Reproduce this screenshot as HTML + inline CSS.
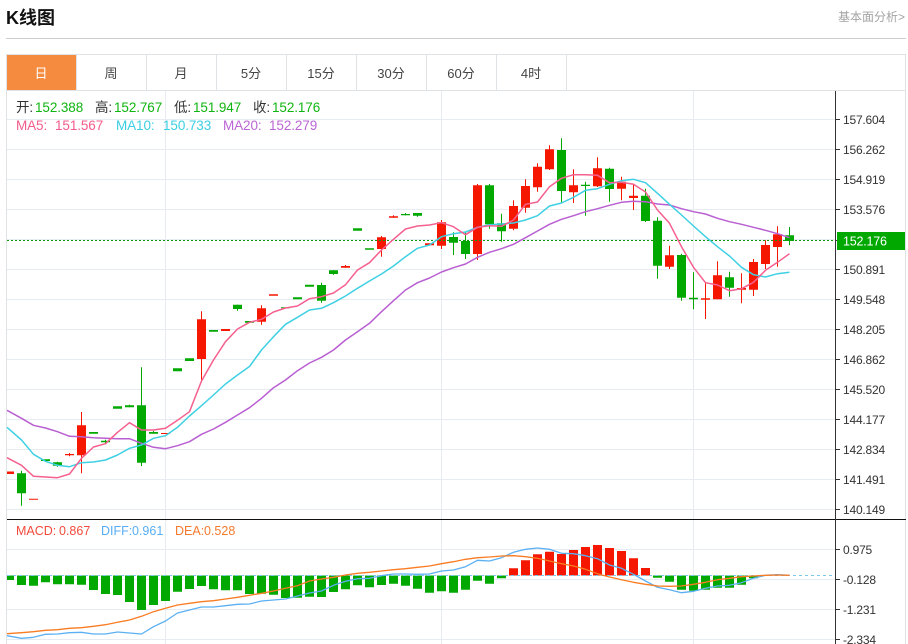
<!DOCTYPE html>
<html><head><meta charset="utf-8"><style>
html,body{margin:0;padding:0;background:#fff}
body{width:908px;height:644px;overflow:hidden;position:relative}
svg{position:absolute;left:0;top:0}
text{font-family:"Liberation Sans","Noto Sans CJK SC",sans-serif}
.ax{font-size:12px;fill:#333;letter-spacing:-.2px}
.tb{font-size:13px;fill:#444;text-anchor:middle}
.lg{font-size:13.5px;letter-spacing:-.1px}
.m{font-size:12.5px}
</style></head><body>
<svg width="908" height="644" viewBox="0 0 908 644">
<text x="6" y="24" font-size="18" font-weight="700" fill="#111">K线图</text>
<text x="905" y="21" font-size="12" fill="#a3a3a3" text-anchor="end">基本面分析&gt;</text>
<path d="M6 38.5H906" stroke="#ccc" fill="none"/>
<path d="M6 54.5H906M6 90.5H906M6.5 54V644M905.5 54V644M76.5 55V90M146.5 55V90M216.5 55V90M286.5 55V90M356.5 55V90M426.5 55V90M496.5 55V90M566.5 55V90" stroke="#dfe3e6" fill="none"/>
<rect x="7" y="55" width="69" height="35" fill="#f48b3f"/>
<text class="tb" x="41" y="78" style="fill:#fff">日</text>
<text class="tb" x="111" y="78">周</text>
<text class="tb" x="181" y="78">月</text>
<text class="tb" x="251" y="78">5分</text>
<text class="tb" x="321" y="78">15分</text>
<text class="tb" x="391" y="78">30分</text>
<text class="tb" x="461" y="78">60分</text>
<text class="tb" x="531" y="78">4时</text>
<!-- grid -->
<path d="M7 119.5H835M7 149.5H835M7 179.5H835M7 209.5H835M7 239.5H835M7 269.5H835M7 299.5H835M7 329.5H835M7 359.5H835M7 389.5H835M7 419.5H835M7 449.5H835M7 479.5H835M7 509.5H835M7 549.5H835M7 579.5H835M7 609.5H835M7 639.5H835M165.5 91V644M441.5 91V644M693.5 91V644" stroke="#e6ecf2" fill="none"/>
<!-- legend -->
<text class="lg" y="112"><tspan x="16" fill="#333">开:</tspan><tspan x="35" fill="#11b511">152.388</tspan><tspan x="95" fill="#333">高:</tspan><tspan x="114" fill="#11b511">152.767</tspan><tspan x="174" fill="#333">低:</tspan><tspan x="193" fill="#11b511">151.947</tspan><tspan x="253" fill="#333">收:</tspan><tspan x="272" fill="#11b511">152.176</tspan></text>
<text class="lg" y="130"><tspan x="16" fill="#f45c8c">MA5:</tspan><tspan x="55" fill="#f45c8c">151.567</tspan><tspan x="116" fill="#3ccfe3">MA10:</tspan><tspan x="163" fill="#3ccfe3">150.733</tspan><tspan x="223" fill="#bb66d4">MA20:</tspan><tspan x="269" fill="#bb66d4">152.279</tspan></text>
<!-- wicks -->
<path stroke="#00a800" fill="none" d="M21.5 470.7V505.7M57.5 461.7V466.7M105.5 439.7V443.3M129.5 404.7V407.3M141.5 367.3V466M153.5 431V433.7M237.5 304.7V310.7M321.5 282.7V302.7M333.5 270.3V274.7M405.5 213V215.3M417.5 213V216.7M453.5 232.3V255M465.5 232.3V259M489.5 184V228.7M501.5 213.7V241.7M561.5 138.3V202.3M585.5 181.7V215.7M609.5 167.7V201.7M645.5 188.7V222M657.5 217.3V278.7M681.5 253.7V300.7M693.5 272.3V309.3M729.5 271.7V296.7M789.5 227V245.3"/>
<path stroke="#f51700" fill="none" d="M69.5 453V456.3M81.5 412V473.3M201.5 311.3V380M261.5 305.3V324.7M345.5 265V267.7M381.5 236V256.7M393.5 215.3V217.7M441.5 220V249M477.5 184V260M513.5 200.3V230.3M525.5 179.3V212.7M537.5 163.3V191.7M549.5 145.3V170M573.5 169.3V203M597.5 157.3V187M621.5 176.7V200.3M633.5 184V210M669.5 245.7V269M705.5 283.3V319M717.5 261.3V299.3M741.5 273.3V303.3M753.5 259V296M765.5 240.3V269M777.5 226.3V266.7"/>
<!-- bodies -->
<path fill="#00a800" d="M17 473.3h9V493.3h-9zM41 459.3h9V461h-9zM53 462.3h9V465.7h-9zM89 432h9V433.7h-9zM101 440.7h9V442.3h-9zM113 406.3h9V408.7h-9zM125 405.3h9V407.3h-9zM137 405.3h9V462.7h-9zM149 432h9V433.7h-9zM173 368.3h9V371.3h-9zM185 358.3h9V361h-9zM209 330h9V331.7h-9zM233 304.7h9V309h-9zM245 321h9V322.7h-9zM281 307.3h9V308.3h-9zM293 297.3h9V299.3h-9zM305 284.7h9V286.7h-9zM317 285h9V300.7h-9zM329 270.3h9V274h-9zM353 228.3h9V230.7h-9zM365 248.3h9V249.7h-9zM401 214h9V215.3h-9zM413 213h9V215.7h-9zM449 237h9V242.7h-9zM461 241h9V254h-9zM485 185.3h9V224.3h-9zM497 223.3h9V231.3h-9zM557 150h9V191h-9zM581 184.7h9V186h-9zM605 168.7h9V189h-9zM641 195.7h9V221h-9zM653 220.7h9V265.7h-9zM677 255h9V297.7h-9zM689 297.7h9V299.3h-9zM725 277.3h9V287.7h-9zM785 235.3h9V241h-9z"/>
<path fill="#f51700" d="M7 471.5h7V474H7zM29 498.7h9V499.7h-9zM65 454h9V455.3h-9zM77 425.3h9V455.3h-9zM161 433h9V434h-9zM197 319.3h9V359h-9zM221 329h9V331h-9zM257 308.3h9V321.7h-9zM269 294.3h9V295.7h-9zM341 266h9V267.7h-9zM377 237.3h9V249h-9zM389 216.3h9V217.7h-9zM425 243.3h9V245.3h-9zM437 222.3h9V245.7h-9zM473 185.3h9V254h-9zM509 206h9V228.7h-9zM521 186h9V207.7h-9zM533 166.7h9V187.3h-9zM545 149.3h9V169.3h-9zM569 185.3h9V192.3h-9zM593 168.3h9V186.3h-9zM617 181.7h9V188.7h-9zM629 195.7h9V198h-9zM665 255.3h9V266.7h-9zM701 298.3h9V299.7h-9zM713 275.3h9V299.3h-9zM737 288h9V289.7h-9zM749 262h9V289.7h-9zM761 245h9V264h-9zM773 234.3h9V247h-9z"/>
<!-- price line -->
<path d="M7 240.5H835" stroke="#0a9a0a" stroke-dasharray="2 2" fill="none"/>
<!-- MA lines -->
<g fill="none" stroke-width="1.5" stroke-linejoin="round">
<polyline stroke="#b95fd2" points="7,410.3 21.5,418.3 33.5,425.3 45.5,428 57.5,431.7 69.5,436.3 81.5,436.7 93.5,437.7 105.5,438.3 117.5,438.7 129.5,438.7 141.5,443.3 153.5,447.3 165.5,448.7 177.5,445.7 189.5,441.7 201.5,434.3 213.5,429 225.5,422.3 237.5,415 249.5,407.7 261.5,398.3 273.5,387.7 285.5,380 297.5,370.7 309.5,363 321.5,357.3 333.5,350 345.5,340 357.5,331.7 369.5,323.3 381.5,311.7 393.5,300.7 405.5,290 417.5,282.7 429.5,278 441.5,272 453.5,267.7 465.5,264 477.5,257.3 489.5,252.3 501.5,248.7 513.5,244.3 525.5,237.7 537.5,231 549.5,224.3 561.5,219.3 573.5,215.7 585.5,211.7 597.5,208.7 609.5,205.3 621.5,202.3 633.5,201.3 645.5,201.7 657.5,204 669.5,205 681.5,208.7 693.5,211.7 705.5,214 717.5,218.3 729.5,221.7 741.5,224.3 753.5,227.3 765.5,230.3 777.5,233.7 789.5,237.7"/>
<polyline stroke="#3fd0e4" points="7,427.3 21.5,440 33.5,454.3 45.5,461.3 57.5,465.3 69.5,466.7 81.5,462.7 93.5,462 105.5,460 117.5,455 129.5,448.3 141.5,445 153.5,438.3 165.5,435.7 177.5,427.3 189.5,416 201.5,405.7 213.5,395 225.5,384 237.5,375 249.5,366.5 261.5,350 273.5,336.7 285.5,324.3 297.5,317.3 309.5,310 321.5,308.3 333.5,302.7 345.5,296 357.5,288.3 369.5,281 381.5,274 393.5,266 405.5,256.7 417.5,248.3 429.5,245 441.5,236.7 453.5,233.7 465.5,232 477.5,227.3 489.5,224.7 501.5,224 513.5,223 525.5,220 537.5,215.7 549.5,206 561.5,203 573.5,197.3 585.5,190.3 597.5,188.7 609.5,184.3 621.5,180.7 633.5,179.3 645.5,182.7 657.5,193.3 669.5,204.3 681.5,215 693.5,226 705.5,236.7 717.5,246.7 729.5,256 741.5,267.3 753.5,274.7 765.5,277 777.5,273.7 789.5,272.3"/>
<polyline stroke="#f5608f" points="7,457.7 21.5,465.3 33.5,476.3 45.5,477 57.5,477.7 69.5,474 81.5,458.3 93.5,447 105.5,443.7 117.5,432.3 129.5,422.7 141.5,430 153.5,430 165.5,428.3 177.5,420.3 189.5,411.7 201.5,381 213.5,360 225.5,341.7 237.5,329 249.5,322.3 261.5,319.3 273.5,312 285.5,308 297.5,306 309.5,298.7 321.5,296.7 333.5,293 345.5,284.7 357.5,270 369.5,262.7 381.5,250 393.5,239.3 405.5,229 417.5,226 429.5,225 441.5,222.7 453.5,226.7 465.5,234.7 477.5,227.3 489.5,225.7 501.5,226.3 513.5,220 525.5,204.3 537.5,202 549.5,186.7 561.5,178.3 573.5,174.7 585.5,174.7 597.5,175.3 609.5,182.7 621.5,182.3 633.5,184.3 645.5,192 657.5,210 669.5,223.3 681.5,246.7 693.5,267.3 705.5,282.7 717.5,285 729.5,290.7 741.5,288.7 753.5,282.3 765.5,270.3 777.5,262.3 789.5,253.7"/>
</g>
<!-- MACD legend -->
<text class="m" y="535"><tspan x="16" fill="#f24a3c">MACD:</tspan><tspan x="59" fill="#f24a3c">0.867</tspan><tspan x="101" fill="#57aef5">DIFF:</tspan><tspan x="132" fill="#57aef5">0.961</tspan><tspan x="175" fill="#f57a2c">DEA:</tspan><tspan x="204" fill="#f57a2c">0.528</tspan></text>
<!-- MACD bars -->
<path fill="#00a800" d="M7 575.5h7V580H7zM17 575.5h9V585h-9zM29 575.5h9V585.7h-9zM41 575.5h9V582.3h-9zM53 575.5h9V584.3h-9zM65 575.5h9V584.3h-9zM77 575.5h9V584.7h-9zM89 575.5h9V590h-9zM101 575.5h9V594h-9zM113 575.5h9V595h-9zM125 575.5h9V602h-9zM137 575.5h9V610h-9zM149 575.5h9V605h-9zM161 575.5h9V601h-9zM173 575.5h9V591.7h-9zM185 575.5h9V589h-9zM197 575.5h9V586h-9zM209 575.5h9V589.3h-9zM221 575.5h9V590.3h-9zM233 575.5h9V590.3h-9zM245 575.5h9V594h-9zM257 575.5h9V593.7h-9zM269 575.5h9V594.7h-9zM281 575.5h9V598h-9zM293 575.5h9V597.7h-9zM305 575.5h9V596.7h-9zM317 575.5h9V597h-9zM329 575.5h9V592h-9zM341 575.5h9V589.3h-9zM353 575.5h9V585.3h-9zM365 575.5h9V587.3h-9zM377 575.5h9V585h-9zM389 575.5h9V583.7h-9zM401 575.5h9V585.7h-9zM413 575.5h9V588.7h-9zM425 575.5h9V592.7h-9zM437 575.5h9V591.3h-9zM449 575.5h9V592.7h-9zM461 575.5h9V589.7h-9zM473 575.5h9V580.7h-9zM485 575.5h9V583.7h-9zM497 575.5h9V578.3h-9zM653 575.5h9V577.7h-9zM665 575.5h9V581.7h-9zM677 575.5h9V589.7h-9zM689 575.5h9V590.7h-9zM701 575.5h9V589.7h-9zM713 575.5h9V587.7h-9zM725 575.5h9V587.7h-9zM737 575.5h9V584.7h-9zM749 575.5h9V578.3h-9z"/>
<path fill="#f51700" d="M509 568.3h9V575.5h-9zM521 560.3h9V575.5h-9zM533 554.3h9V575.5h-9zM545 551.7h9V575.5h-9zM557 554h9V575.5h-9zM569 550h9V575.5h-9zM581 547h9V575.5h-9zM593 545h9V575.5h-9zM605 548h9V575.5h-9zM617 551h9V575.5h-9zM629 558.3h9V575.5h-9zM641 568h9V575.5h-9z"/>
<path d="M7 575.5H835" stroke="#7cc8ea" stroke-dasharray="3 3" fill="none"/>
<g fill="none" stroke-width="1.3" stroke-linejoin="round">
<polyline stroke="#5cb0f2" points="7,635.7 21.5,638.3 33.5,637.3 45.5,634.3 57.5,634 69.5,632.7 81.5,632.3 93.5,634 105.5,634 117.5,632 129.5,633 141.5,634 153.5,626.7 165.5,621 177.5,613 189.5,610 201.5,607 213.5,607 225.5,605.7 237.5,604.3 249.5,604 261.5,601 273.5,600 285.5,599 297.5,596 309.5,593 321.5,591 333.5,585.3 345.5,581.3 357.5,578.7 369.5,578.3 381.5,575.7 393.5,574 405.5,574 417.5,574.3 429.5,574 441.5,571 453.5,570 465.5,566.7 477.5,560.3 489.5,561 501.5,557.7 513.5,552.3 525.5,549.3 537.5,548 549.5,549.3 561.5,553.3 573.5,553.7 585.5,555.7 597.5,558.7 609.5,565 621.5,568.3 633.5,574.3 645.5,581 657.5,587.3 669.5,589.7 681.5,592.7 693.5,591.3 705.5,588.3 717.5,586 729.5,585.3 741.5,582.7 753.5,578.3 765.5,575.3 777.5,574.7 789.5,575.3"/>
<polyline stroke="#f97b22" points="7,633.7 21.5,632.7 33.5,631.7 45.5,630.3 57.5,629.7 69.5,628.3 81.5,627.7 93.5,626.3 105.5,624.7 117.5,622.3 129.5,620 141.5,616.3 153.5,611.7 165.5,608.3 177.5,605 189.5,603.3 201.5,601.7 213.5,600.7 225.5,599 237.5,597.3 249.5,595.3 261.5,593.3 273.5,591 285.5,588.3 297.5,585.7 309.5,581 321.5,579 333.5,577.3 345.5,575 357.5,573.3 369.5,572.3 381.5,571 393.5,569.7 405.5,568.7 417.5,567.3 429.5,566 441.5,563.7 453.5,561.7 465.5,559.3 477.5,557.7 489.5,557 501.5,556 513.5,555.7 525.5,556.7 537.5,558.3 549.5,561 561.5,563.7 573.5,566 585.5,569.3 597.5,573.7 609.5,577 621.5,579.7 633.5,582.3 645.5,584.3 657.5,586 669.5,586.3 681.5,586 693.5,584.3 705.5,582.3 717.5,579.7 729.5,578.3 741.5,576.7 753.5,576 765.5,575.3 777.5,575 789.5,575.3"/>
</g>
<!-- axes -->
<path d="M7 519.5H906" stroke="#111" fill="none"/>
<path d="M835.5 91V644" stroke="#333" fill="none"/>
<path d="M835 119.5h5M835 149.5h5M835 179.5h5M835 209.5h5M835 240.5h5M835 269.5h5M835 299.5h5M835 329.5h5M835 359.5h5M835 389.5h5M835 419.5h5M835 449.5h5M835 479.5h5M835 509.5h5M835 549.5h5M835 579.5h5M835 609.5h5M835 639.5h5" stroke="#333" fill="none"/>
<g>
<text class="ax" x="843" y="124">157.604</text>
<text class="ax" x="843" y="154">156.262</text>
<text class="ax" x="843" y="184">154.919</text>
<text class="ax" x="843" y="214">153.576</text>
<text class="ax" x="843" y="274">150.891</text>
<text class="ax" x="843" y="304">149.548</text>
<text class="ax" x="843" y="334">148.205</text>
<text class="ax" x="843" y="364">146.862</text>
<text class="ax" x="843" y="394">145.520</text>
<text class="ax" x="843" y="424">144.177</text>
<text class="ax" x="843" y="454">142.834</text>
<text class="ax" x="843" y="484">141.491</text>
<text class="ax" x="843" y="514">140.149</text>
<text class="ax" x="843" y="554">0.975</text>
<text class="ax" x="843" y="584">-0.128</text>
<text class="ax" x="843" y="614">-1.231</text>
<text class="ax" x="843" y="644">-2.334</text>
</g>
<rect x="837" y="232" width="68" height="18" fill="#00a800"/>
<text x="843" y="245.5" font-size="12.5" fill="#fff" letter-spacing="-.2">152.176</text>
</svg>
</body></html>
